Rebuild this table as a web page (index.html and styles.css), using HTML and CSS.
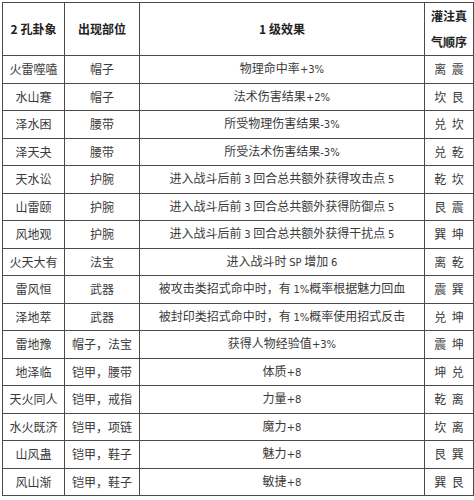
FILE: index.html
```html
<!DOCTYPE html>
<html lang="zh">
<head>
<meta charset="utf-8">
<link rel="stylesheet" href="styles.css">
</head>
<body>
<table class="grid">
  <colgroup>
    <col class="c1"><col class="c2"><col class="c3"><col class="c4">
  </colgroup>
  <thead>
    <tr class="head">
      <th>2 孔卦象</th>
      <th>出现部位</th>
      <th>1 级效果</th>
      <th class="order">灌注真<br>气顺序</th>
    </tr>
  </thead>
  <tbody>
    <tr><td>火雷噬嗑</td><td>帽子</td><td>物理命中率<span class="lat">+3%</span></td><td class="seq">离 震</td></tr>
    <tr><td>水山蹇</td><td>帽子</td><td>法术伤害结果<span class="lat">+2%</span></td><td class="seq">坎 艮</td></tr>
    <tr><td>泽水困</td><td>腰带</td><td>所受物理伤害结果<span class="lat">-3%</span></td><td class="seq">兑 坎</td></tr>
    <tr><td>泽天夬</td><td>腰带</td><td>所受法术伤害结果<span class="lat">-3%</span></td><td class="seq">兑 乾</td></tr>
    <tr><td>天水讼</td><td>护腕</td><td>进入战斗后前 <span class="lat">3</span> 回合总共额外获得攻击点 <span class="lat">5</span></td><td class="seq">乾 坎</td></tr>
    <tr><td>山雷颐</td><td>护腕</td><td>进入战斗后前 <span class="lat">3</span> 回合总共额外获得防御点 <span class="lat">5</span></td><td class="seq">艮 震</td></tr>
    <tr><td>风地观</td><td>护腕</td><td>进入战斗后前 <span class="lat">3</span> 回合总共额外获得干扰点 <span class="lat">5</span></td><td class="seq">巽 坤</td></tr>
    <tr><td>火天大有</td><td>法宝</td><td>进入战斗时 <span class="lat">SP</span> 增加 <span class="lat">6</span></td><td class="seq">离 乾</td></tr>
    <tr><td>雷风恒</td><td>武器</td><td>被攻击类招式命中时，有 <span class="lat">1%</span>概率根据魅力回血</td><td class="seq">震 巽</td></tr>
    <tr><td>泽地萃</td><td>武器</td><td>被封印类招式命中时，有 <span class="lat">1%</span>概率使用招式反击</td><td class="seq">兑 坤</td></tr>
    <tr><td>雷地豫</td><td>帽子，法宝</td><td>获得人物经验值<span class="lat">+3%</span></td><td class="seq">震 坤</td></tr>
    <tr><td>地泽临</td><td>铠甲，腰带</td><td>体质<span class="lat">+8</span></td><td class="seq">坤 兑</td></tr>
    <tr><td>天火同人</td><td>铠甲，戒指</td><td>力量<span class="lat">+8</span></td><td class="seq">乾 离</td></tr>
    <tr><td>水火既济</td><td>铠甲，项链</td><td>魔力<span class="lat">+8</span></td><td class="seq">坎 离</td></tr>
    <tr><td>山风蛊</td><td>铠甲，鞋子</td><td>魅力<span class="lat">+8</span></td><td class="seq">艮 巽</td></tr>
    <tr><td>风山渐</td><td>铠甲，鞋子</td><td>敏捷<span class="lat">+8</span></td><td class="seq">巽 艮</td></tr>
  </tbody>
</table>
</body>
</html>
```

FILE: styles.css
```css
html, body {
  margin: 0;
  padding: 0;
  background: #ffffff;
}

body {
  padding: 2px 0 0 2px;
  font-family: "Noto Sans CJK SC", "DejaVu Sans", sans-serif;
  font-size: 12px;
  color: #3a3a3a;
}

.grid {
  border-collapse: collapse;
  table-layout: fixed;
  width: 471px;
}

.c1 { width: 62px; }
.c2 { width: 75px; }
.c3 { width: 285px; }
.c4 { width: 49px; }

.grid th,
.grid td {
  border: 1.5px solid #4a4a4a;
  text-align: center;
  vertical-align: middle;
  padding: 0;
  line-height: 14px;
  white-space: nowrap;
  overflow: hidden;
}

.grid tbody tr {
  height: 27.5px;
}

.lat {
  font-family: "DejaVu Sans", sans-serif;
  font-size: 10px;
}

.seq {
  word-spacing: 3px;
}

.head {
  height: 53px;
}

.head th {
  font-weight: bold;
  color: #222;
}

.head th.order {
  line-height: 26px;
}
```
